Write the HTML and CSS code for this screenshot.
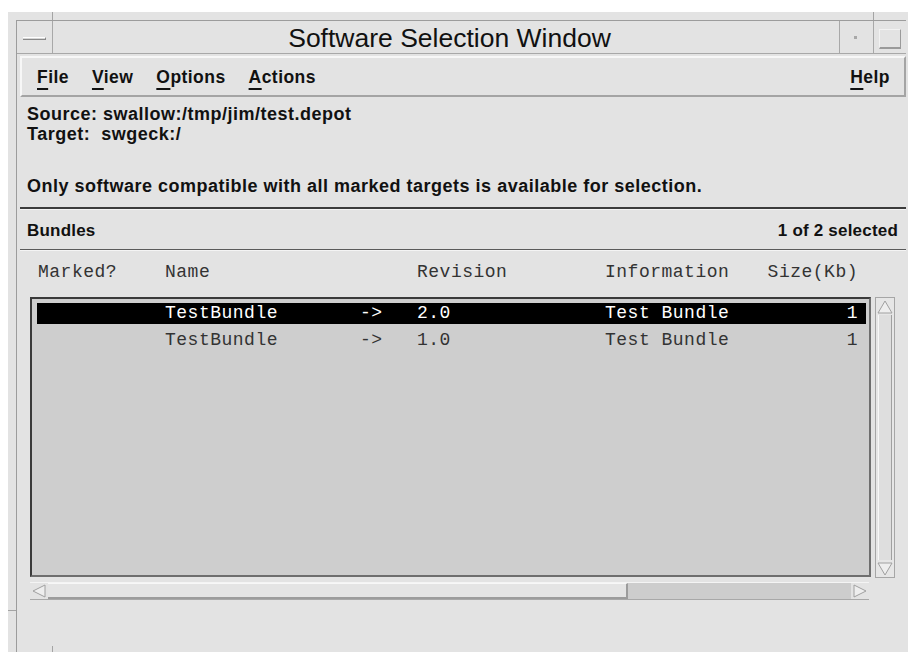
FILE: index.html
```html
<!DOCTYPE html>
<html lang="en">
<head>
<meta charset="utf-8">
<title>Software Selection Window</title>
<link rel="stylesheet" href="styles.css">
</head>
<body>
<div class="window">
  <span class="tick tick-top-left"></span>
  <span class="tick tick-top-right"></span>
  <span class="tick tick-left-bottom"></span>
  <span class="tick tick-bottom-left"></span>
  <div class="frame">
    <div class="titlebar">
      <div class="tb-btn menu-btn"><span class="bar"></span></div>
      <div class="title">Software Selection Window</div>
      <div class="tb-btn min-btn"><span class="dot"></span></div>
      <div class="tb-btn max-btn"><span class="box"></span></div>
    </div>
    <div class="main">
      <div class="menubar">
        <span class="menu-item"><u>F</u>ile</span>
        <span class="menu-item"><u>V</u>iew</span>
        <span class="menu-item"><u>O</u>ptions</span>
        <span class="menu-item"><u>A</u>ctions</span>
        <span class="menu-item help"><u>H</u>elp</span>
      </div>
      <div class="info">
        <div class="line">Source: swallow:/tmp/jim/test.depot</div>
        <div class="line">Target:&nbsp; swgeck:/</div>
        <div class="line note">Only software compatible with all marked targets is available for selection.</div>
      </div>
      <div class="sep sep-a"></div>
      <div class="section-head">
        <span>Bundles</span>
        <span>1 of 2 selected</span>
      </div>
      <div class="sep sep-b"></div>
      <div class="colheads">
        <span>Marked?</span>
        <span>Name</span>
        <span>Revision</span>
        <span>Information</span>
        <span class="size">Size(Kb)</span>
      </div>
      <div class="listarea">
        <div class="list-wrap">
          <div class="list">
            <div class="row selected">
              <span></span>
              <span>TestBundle</span>
              <span>-&gt;</span>
              <span>2.0</span>
              <span>Test Bundle</span>
              <span class="size">1</span>
            </div>
            <div class="row">
              <span></span>
              <span>TestBundle</span>
              <span>-&gt;</span>
              <span>1.0</span>
              <span>Test Bundle</span>
              <span class="size">1</span>
            </div>
          </div>
          <div class="vscroll">
            <div class="arrow">
              <svg width="16" height="14" viewBox="0 0 16 14"><path d="M8 1 L15 13 L1 13 Z" fill="#eeeeee" stroke="#a0a0a0" stroke-width="1"/></svg>
            </div>
            <div class="vthumb"></div>
            <div class="arrow">
              <svg width="16" height="14" viewBox="0 0 16 14"><path d="M1 1 L15 1 L8 13 Z" fill="#eeeeee" stroke="#a0a0a0" stroke-width="1"/></svg>
            </div>
          </div>
        </div>
        <div class="hscroll">
          <div class="harrow">
            <svg width="14" height="14" viewBox="0 0 14 14"><path d="M1 7 L13 1 L13 13 Z" fill="#eeeeee" stroke="#a0a0a0" stroke-width="1"/></svg>
          </div>
          <div class="hthumb"></div>
          <div class="htrough"></div>
          <div class="harrow">
            <svg width="14" height="14" viewBox="0 0 14 14"><path d="M1 1 L13 7 L1 13 Z" fill="#eeeeee" stroke="#a0a0a0" stroke-width="1"/></svg>
          </div>
        </div>
      </div>
    </div>
  </div>
</div>
</body>
</html>
```

FILE: styles.css
```css
* { box-sizing: border-box; }

html, body { margin: 0; }

body {
  width: 908px;
  height: 652px;
  overflow: hidden;
  background: #ffffff;
  font-family: "Liberation Sans", Arial, sans-serif;
  color: #111;
}

/* outer resize frame of the window */
.window {
  position: relative;
  margin: 12px 0 0 8px;
  height: 640px;
  background: #e3e3e3;
  padding: 8px 2px 0 8px;
}

/* corner marks on the resize frame */
.tick {
  position: absolute;
  background: #a4a4a4;
}

.tick-top-left { left: 44px; top: 0; width: 1px; height: 8px; }
.tick-top-right { left: 865px; top: 0; width: 1px; height: 8px; }
.tick-left-bottom { left: 0; top: 598px; width: 8px; height: 1px; }
.tick-bottom-left { left: 44px; bottom: 0; width: 1px; height: 6px; }

.frame {
  height: 100%;
  border-left: 1px solid #9c9c9c;
  border-top: 1px solid #9c9c9c;
}

/* title bar */
.titlebar {
  display: flex;
  height: 33px;
  border-bottom: 1px solid #a8a8a8;
}

.tb-btn {
  display: flex;
  align-items: center;
  justify-content: center;
}

.menu-btn {
  width: 36px;
  border-right: 1px solid #a8a8a8;
}

.menu-btn .bar {
  width: 23px;
  height: 3px;
  margin-top: 2px;
  background: #d6d6d6;
  border-top: 1px solid #ffffff;
  border-bottom: 1px solid #888;
  border-right: 1px solid #888;
}

.title {
  flex: 1;
  text-align: center;
  padding-left: 7px;
  font-size: 26.5px;
  line-height: 35px;
  color: #111;
}

.min-btn {
  width: 34px;
  border-left: 1px solid #a8a8a8;
}

.min-btn .dot {
  width: 3px;
  height: 3px;
  background: #a8a8a8;
  margin: 0 0 0 -2px;
}

.max-btn {
  width: 33px;
  border-left: 1px solid #a8a8a8;
}

.max-btn .box {
  width: 22px;
  height: 20px;
  margin-top: 4px;
  border-right: 1px solid #9a9a9a;
  border-bottom: 2px solid #9a9a9a;
  border-top: 1px solid #f2f2f2;
  border-left: 1px solid #f2f2f2;
}

/* client area */
.main {
  padding: 2px 0 0 3px;
}

.menubar {
  display: flex;
  align-items: center;
  gap: 23px;
  height: 41px;
  padding: 2px 14px 0 15px;
  border-top: 2px solid #f7f7f7;
  border-left: 2px solid #f7f7f7;
  border-bottom: 2px solid #a4a4a4;
  border-right: 2px solid #a4a4a4;
  font-weight: bold;
  font-size: 17.5px;
  letter-spacing: 0.45px;
}

.menu-item u {
  text-decoration-thickness: 2px;
  text-underline-offset: 5px;
}

.menu-item.help {
  margin-left: auto;
}

.info {
  padding: 7px 0 0 7px;
  font-weight: bold;
  font-size: 18px;
  letter-spacing: 0.5px;
}

.line {
  line-height: 20px;
  white-space: nowrap;
}

.line.note {
  margin-top: 32px;
}

.sep {
  height: 3px;
  border-top: 2px solid #3c3c3c;
  border-bottom: 1px solid #f4f4f4;
}

.sep-a { margin-top: 11px; }

.section-head {
  display: flex;
  justify-content: space-between;
  padding: 0 8px 0 7px;
  margin-top: 11px;
  line-height: 20px;
  font-weight: bold;
  font-size: 17px;
  letter-spacing: 0.2px;
}

.sep-b {
  margin-top: 8px;
  border-top: 1px solid #5a5a5a;
  height: 2px;
}

/* column headers and list rows share one grid */
.colheads,
.row {
  display: grid;
  grid-template-columns: 128px 195px 57px 188px 1fr auto;
  font-family: "Liberation Mono", "Courier New", monospace;
  font-size: 18px;
  letter-spacing: 0.5px;
  white-space: pre;
}

.colheads {
  grid-template-columns: 127px 252px 188px 1fr auto;
  margin-top: 11px;
  padding: 0 48px 0 18px;
  line-height: 20px;
  color: #333;
}

.listarea {
  margin-top: 15px;
  padding-left: 10px;
}

.list-wrap {
  display: flex;
  height: 281px;
}

.list {
  width: 841px;
  height: 280px;
  background: #cecece;
  border-top: 2px solid #3a3a3a;
  border-left: 2px solid #3a3a3a;
  border-bottom: 2px solid #6e6e6e;
  border-right: 2px solid #6e6e6e;
  padding: 4px 3px 0 5px;
}

.row {
  height: 21px;
  line-height: 21px;
  margin-bottom: 6px;
  color: #333;
}

.row .size {
  text-align: right;
  padding-right: 8px;
}

.row.selected {
  background: #000;
  color: #fff;
}

.vscroll {
  width: 20px;
  margin-left: 4px;
  display: flex;
  flex-direction: column;
  border: 1px solid #a6a6a6;
  background: #e6e6e6;
}

.arrow {
  height: 17px;
  display: flex;
  align-items: center;
  justify-content: center;
}

.vthumb {
  flex: 1;
  margin: 0 2px;
  border-left: 1px solid #f8f8f8;
  border-right: 1px solid #a0a0a0;
  background: #dedede;
}

.hscroll {
  display: flex;
  width: 839px;
  height: 18px;
  margin-top: 4px;
  border-top: 1px solid #f4f4f4;
  border-bottom: 1px solid #a8a8a8;
}

.harrow {
  width: 18px;
  display: flex;
  align-items: center;
  justify-content: center;
}

.hthumb {
  width: 580px;
  background: #e4e4e4;
  border-top: 1px solid #f7f7f7;
  border-bottom: 2px solid #9c9c9c;
  border-right: 2px solid #9c9c9c;
}

.htrough {
  flex: 1;
  background: #cdcdcd;
}
```
